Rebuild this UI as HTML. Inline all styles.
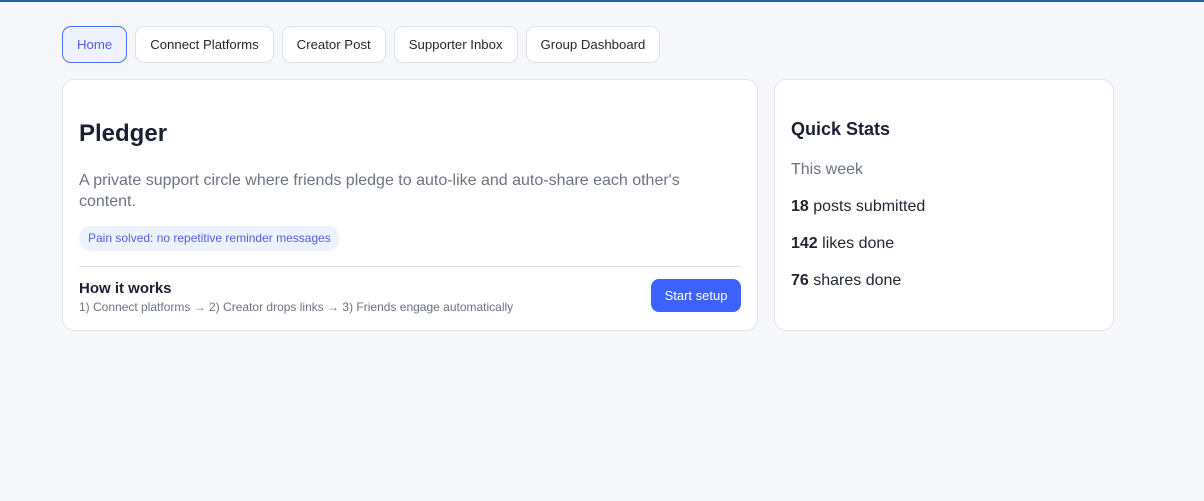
<!DOCTYPE html>
<html><head><meta charset="utf-8"><style>
*{box-sizing:border-box;margin:0;padding:0}
body{width:1204px;height:501px;background:#f6f7fb;font-family:"Liberation Sans",sans-serif;border-top:2px solid #2d5ca6;position:relative;overflow:hidden}
.nav{position:absolute;top:24px;left:62px;display:flex;gap:8px}
.nav div{height:37px;border:1px solid #dde1ea;background:#fff;border-radius:9px;padding:0 14px;font-size:13.2px;color:#1f2430;line-height:35px}
.nav .a{background:#eef2ff;border-color:#4f6ef7;color:#4f5fe0}
.card{position:absolute;background:#fff;border:1px solid #e1e4ec;border-radius:12px}
h1{position:absolute;left:16px;top:40px;font-size:24px;color:#1a2030;font-weight:bold}
.desc{position:absolute;left:16px;top:90px;width:620px;font-size:16px;line-height:21px;color:#6b7280}
.pill{position:absolute;left:16px;top:146px;height:25px;padding:0 9px;border-radius:13px;background:#eef2ff;color:#4f5fe0;font-size:12px;line-height:25px}
.hr{position:absolute;left:16px;right:16px;top:186px;border-top:1px solid #e1e4ec}
.h{position:absolute;left:16px;top:200px;font-size:15px;font-weight:bold;color:#1a2030}
.s{position:absolute;left:16px;top:220px;font-size:12px;color:#6b7280}
.btn{position:absolute;right:16px;top:199px;width:90px;height:33px;background:#3d63ff;border-radius:8px;color:#fff;font-size:13px;line-height:33px;text-align:center}
.q{position:absolute;left:16px;font-size:16px;color:#1f2430}
</style></head><body>
<div class="nav"><div class="a">Home</div><div>Connect Platforms</div><div>Creator Post</div><div>Supporter Inbox</div><div>Group Dashboard</div></div>
<div class="card" style="left:62px;top:77px;width:696px;height:252px">
<h1>Pledger</h1>
<div class="desc">A private support circle where friends pledge to auto-like and auto-share each other's content.</div>
<div class="pill">Pain solved: no repetitive reminder messages</div>
<div class="hr"></div>
<div class="h">How it works</div>
<div class="s">1) Connect platforms → 2) Creator drops links → 3) Friends engage automatically</div>
<div class="btn">Start setup</div>
</div>
<div class="card" style="left:774px;top:77px;width:340px;height:252px">
<div class="q" style="top:39px;font-size:18px;font-weight:bold;color:#1a2030">Quick Stats</div>
<div class="q" style="top:81px;color:#6b7280">This week</div>
<div class="q" style="top:118px"><b>18</b> posts submitted</div>
<div class="q" style="top:155px"><b>142</b> likes done</div>
<div class="q" style="top:192px"><b>76</b> shares done</div>
</div>
</body></html>
